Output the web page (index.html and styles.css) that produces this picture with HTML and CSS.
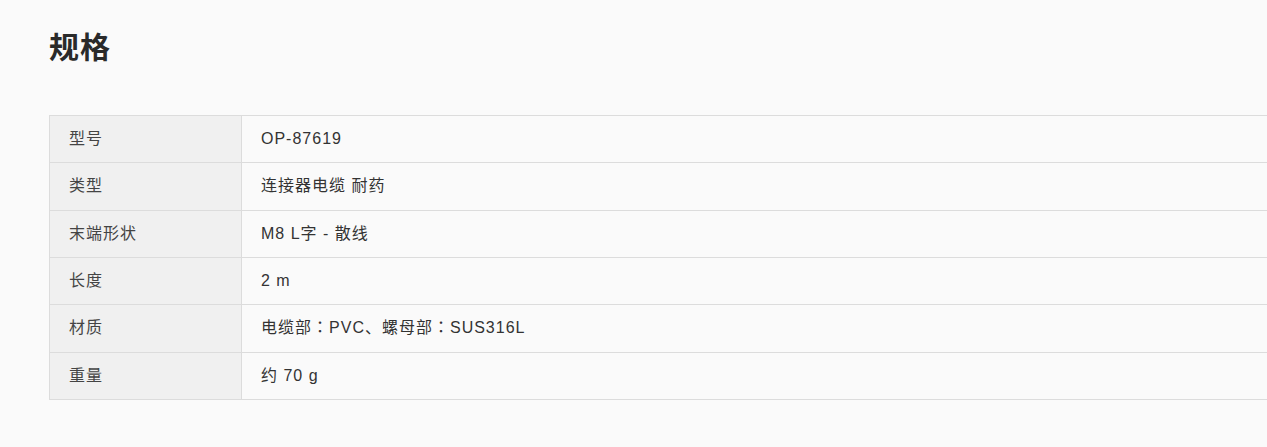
FILE: index.html
```html
<!DOCTYPE html>
<html lang="zh-CN">
<head>
<meta charset="utf-8">
<title>规格</title>
<link rel="stylesheet" href="styles.css">
</head>
<body>
<div class="page">
  <h2 class="title">规格</h2>
  <table class="spec">
    <tr><th>型号</th><td>OP-87619</td></tr>
    <tr><th>类型</th><td>连接器电缆 耐药</td></tr>
    <tr><th>末端形状</th><td>M8 L字 - 散线</td></tr>
    <tr><th>长度</th><td>2 m</td></tr>
    <tr><th>材质</th><td>电缆部<span class="punct" lang="ja">：</span>PVC、螺母部<span class="punct" lang="ja">：</span>SUS316L</td></tr>
    <tr><th>重量</th><td>约 70 g</td></tr>
  </table>
</div>
</body>
</html>
```
FILE: styles.css
```css
html, body {
  margin: 0;
  padding: 0;
  background: #fafafa;
  overflow: hidden;
}
body {
  font-family: "Liberation Sans", "Noto Sans CJK SC", sans-serif;
  color: #333;
}
.page {
  padding: 28px 0 0 49px;
}
.title {
  margin: 0;
  font-size: 30px;
  line-height: 40px;
  font-weight: bold;
  letter-spacing: 1px;
  color: #2a2a2a;
}
.spec {
  margin-top: 47px;
  width: 1240px;
  border-collapse: collapse;
  font-size: 16px;
  letter-spacing: 1px;
}
.spec th, .spec td {
  border: 1px solid #dcdcdc;
  padding: 10px 19px;
  line-height: 26.33px;
  text-align: left;
  font-weight: normal;
}
.spec th {
  width: 153px;
  background: #f0f0f0;
  color: #444;
}
.spec td {
  background: #fafafa;
  color: #333;
}
.punct {
  font-family: "Noto Sans CJK JP", sans-serif;
  line-height: 0;
}
```
